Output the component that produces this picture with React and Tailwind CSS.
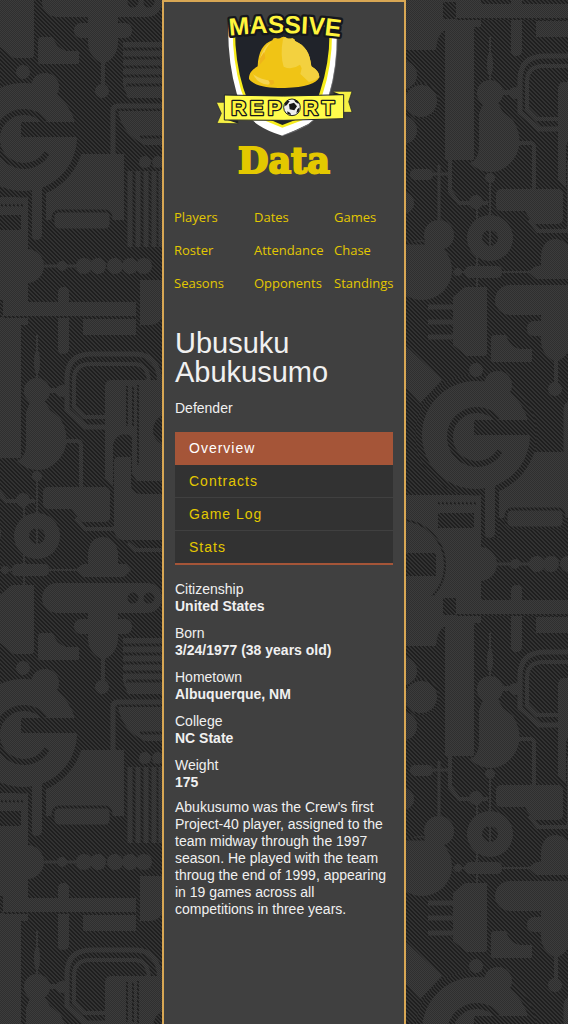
const navLinks = [
  "Players", "Dates", "Games",
  "Roster", "Attendance", "Chase",
  "Seasons", "Opponents", "Standings",
];

const tabs = ["Overview", "Contracts", "Game Log", "Stats"];

const facts = [
  ["Citizenship", "United States"],
  ["Born", "3/24/1977 (38 years old)"],
  ["Hometown", "Albuquerque, NM"],
  ["College", "NC State"],
  ["Weight", "175"],
];

function Machinery() {
  const dark = "url(#stripes)";
  const light = "url(#mesh)";
  return (
    <g id="machinery" fill={light} stroke="none">
      {/* tank, bar and piston */}
      <path d="M12 -11H34V55Q34 58 30 58H14L0 47V-1Z" />
      <rect x="42" y="-13" width="120" height="30" rx="15" />
      <circle cx="133" cy="2" r="5.5" fill={dark} />
      <circle cx="149" cy="2" r="5.5" fill={dark} />
      <path d="M88 0H118V42Q118 56 105 63H101Q88 56 88 42Z" />
      <rect x="74" y="23" width="58" height="15" rx="7" />
      <rect x="101" y="60" width="4" height="30" />
      <circle cx="102" cy="91" r="7" />
      <path d="M40 37H53Q56 48 66 51H79V64H41Q38 64 38 61V39Z" />
      <path d="M-25 9H0M-25 24H0M-25 39H0" stroke={light} strokeWidth="5" />
      <path d="M-53 42L-11 82L-33 105L-53 84Z" />
      {/* ribs on the right */}
      <path d="M123 42H162V98H128L123 85Z" />
      <path d="M123 49H162M123 58H162M123 67H162M123 76H162M126 85H162" stroke={dark} strokeWidth="3" />
      <path d="M118 111H162V145H145Q122 134 118 111Z" />
      <path d="M140 137H162" stroke={dark} strokeWidth="3" />
      <path d="M162 106H118Q113 106 113 111V156" fill="none" stroke={light} strokeWidth="5" />
      <circle cx="145" cy="162" r="6" />
      <circle cx="158" cy="162" r="6" />
      <path d="M130 171V247M138 171V247M146 171V247M154 171V247M161 171V247" stroke={light} strokeWidth="5" />
      {/* block behind the wheel */}
      <path d="M82 154H124V220H45V190Z" />
      <rect x="53" y="211" width="58" height="19" rx="6" stroke={dark} strokeWidth="3" />
      <path d="M-47 197H28V325H-47Z" />
      {/* wheel */}
      <circle cx="23" cy="137" r="57" fill="none" stroke={dark} strokeWidth="7" />
      <circle cx="23" cy="72" r="7" />
      <circle cx="23" cy="137" r="54" />
      <circle cx="45" cy="87" r="14" />
      <path d="M73 117L80 137H76V122Z" fill={dark} />
      <path d="M45 122A27 27 0 1 0 47 153" fill="none" stroke={dark} strokeWidth="6" />
      <path d="M21 122H80V137H21Z" fill={dark} />
      <path d="M28 191H46V240H28Z" fill={dark} />
      <rect x="32" y="183" width="10" height="57" rx="5" />
      <path d="M-15 205H25" stroke={dark} strokeWidth="3" strokeDasharray="2 2" />
      <rect x="-15" y="215" width="36" height="15" fill={dark} />
      <rect x="-47" y="255" width="30" height="23" fill={dark} />
      <circle cx="-53" cy="267" r="45" fill="none" stroke={dark} strokeWidth="2" />
      <circle cx="27" cy="266" r="17" />
      {/* chain */}
      <path d="M44 266H100" stroke={light} strokeWidth="3" />
      <circle cx="62" cy="266" r="5" />
      <circle cx="84" cy="266" r="8" />
      <circle cx="98" cy="266" r="8" />
      <circle cx="115" cy="266" r="8" />
      <circle cx="130" cy="266" r="8" />
      <circle cx="144" cy="266" r="8" />
      {/* cross beam */}
      <rect x="-8" y="300" width="29" height="158" />
      <path d="M-47 298H-8V328Q-16 332 -17 348H-47Z" />
      <rect x="2" y="302" width="134" height="14" />
      <rect x="-10" y="300" width="13" height="17" fill={dark} />
      <rect x="58" y="287" width="11" height="67" rx="5" />
      <rect x="83" y="319" width="53" height="16" />
      <path d="M140 280H162V318Q158 325 150 325H140Z" />
      <path d="M3 317H136" stroke={dark} strokeWidth="2" />
      {/* double pipe and engine */}
      <path d="M107 427H86L67 410V378Q67 354 92 354H135Q158 354 160 382" fill="none" stroke={light} strokeWidth="5" />
      <path d="M107 417H84L74 407V380Q74 364 90 364H134Q148 364 149 382" fill="none" stroke={light} strokeWidth="4" />
      <path d="M111 380H162V481H137L132 474V436Q118 430 113 444V486L105 478V388Q105 380 111 380Z" />
      <path d="M138 385V465M127 386V426M133 386V426" stroke={dark} strokeWidth="2" />
      <circle cx="169" cy="430" r="16" fill={dark} />
      <path d="M116 457H131V486Q132 493 140 494H162V540H122Q114 538 114 528V460Z" />
      <path d="M128 543L136 550H162" fill="none" stroke={light} strokeWidth="4" />
      {/* flask */}
      <path d="M37 335V385" stroke={light} strokeWidth="2" />
      <ellipse cx="37" cy="362" rx="3" ry="12" />
      <circle cx="37" cy="391" r="13" />
      <circle cx="62" cy="391" r="6" />
      <path d="M48 388H62V393H48Z" />
      <path d="M31 400H44L50 410L60 418Q72 438 62 455Q52 470 38 470Q26 470 17 461Q26 457 26 445V412Z" />
      <path d="M66 441H77Q81 441 81 445V487" fill="none" stroke={light} strokeWidth="4" />
      <circle cx="37" cy="476" r="5" />
      <path d="M37 476V515M24 500V585" stroke={light} strokeWidth="2" />
      <rect x="43" y="487" width="67" height="22" rx="5" />
      <path d="M70 506H110V518Q109 522 104 522H82L75 514Z" />
      <path d="M76 518L85 529H116" fill="none" stroke={light} strokeWidth="4" />
      <path d="M-3 457V489L6 501H35" fill="none" stroke={light} strokeWidth="4" />
      <circle cx="23" cy="500" r="7" />
      <circle cx="37" cy="536" r="23" />
      <circle cx="37" cy="536" r="8" fill={dark} />
      <path d="M37 528V544" stroke={light} strokeWidth="2" />
      {/* dome and shaft */}
      <path d="M0 570H90" stroke={light} strokeWidth="2" />
      <circle cx="5" cy="570" r="4" />
      <rect x="12" y="564" width="37" height="12" rx="5" />
      <path d="M88 577V553Q90 537 103 537Q116 538 118 553V577Z" />
      <path d="M75 570L83 564H126L131 570L124 577H83Z" />
      {/* gears on the left */}
      <circle cx="-50" cy="373" r="14" />
      <circle cx="-50" cy="428" r="14" />
      <circle cx="-32" cy="399" r="17" stroke={dark} strokeWidth="2" />
      <rect x="-43" y="467" width="23" height="11" rx="5" />
      <path d="M-20 472H-5M-14 463V518" stroke={light} strokeWidth="3" />
      <circle cx="-50" cy="501" r="11" />
      <circle cx="-14" cy="533" r="15" />
      <circle cx="-31" cy="568" r="30" />
      <path d="M-47 541H-28" stroke={dark} strokeWidth="3" />
    </g>
  );
}

function Backdrop() {
  return (
    <svg className="fixed inset-0 -z-10 h-full w-full" aria-hidden="true">
      <defs>
        <pattern id="stripes" width="4" height="4" patternUnits="userSpaceOnUse">
          <rect width="4" height="4" fill="#323232" />
          <path d="M0 0h2v1H0zM1 1h2v1H1zM2 2h2v1H2zM3 3h1v1H3zM0 3h1v1H0z" fill="#1f1f1f" shapeRendering="crispEdges" />
        </pattern>
        <pattern id="mesh" width="2" height="2" patternUnits="userSpaceOnUse">
          <rect width="2" height="2" fill="#2f2f2f" />
          <path d="M0 0h1v1H0zM1 1h1v1H1z" fill="#3c3c3c" shapeRendering="crispEdges" />
        </pattern>
        <Machinery />
      </defs>
      <rect width="100%" height="100%" fill="url(#stripes)" />
      <use href="#machinery" />
      <use href="#machinery" y="596" />
      <use href="#machinery" x="453" y="-298" />
      <use href="#machinery" x="453" y="298" />
      <use href="#machinery" x="453" y="894" />
    </svg>
  );
}

function Logo() {
  return (
    <svg viewBox="27 30 420 381" className="h-[127px] w-[140px]" role="img" aria-label="Massive Report">
      <path d="M70 58Q150 85 234 85Q320 85 396 68Q400 190 372 285Q350 345 310 372Q275 390 232 407Q190 395 160 375Q115 345 95 280Q66 180 70 58Z" fill="#fff" />
      <path d="M396 100Q398 200 373 285Q350 345 310 374Q275 394 232 407" fill="none" stroke="#77777c" strokeWidth="2" />
      <path d="M83 80H381Q384 190 352 285Q338 335 300 358L232 383L170 358Q130 335 108 270Q82 180 83 80Z" fill="#f6ec1c" />
      <path d="M90 80H373Q377 180 345 275Q330 330 292 352L232 375L178 352Q135 330 115 265Q89 180 90 80Z" fill="#20232a" />
      {/* hard hat */}
      <path d="M132 237C131 218 143 208 158 199C160 155 175 130 202 121Q204 112 215 115Q223 117 230 112Q237 107 244 114Q250 117 262 115Q270 117 270 123C302 137 315 160 319 199Q344 214 343 232C335 250 300 263 240 264C190 265 145 257 132 237Z" fill="#f0c415" />
      <path d="M234 117Q240 108 246 115Q254 118 262 115Q270 117 270 123C302 137 315 160 319 199Q344 214 343 232Q330 243 312 246L286 222L290 205L285 194Q260 212 236 200Q225 165 234 117Z" fill="#f3d13f" />
      <path d="M202 124Q172 140 163 185L178 162Q180 145 202 124ZM144 222Q165 240 200 242L190 254Q158 252 144 222Z" fill="#f5d552" />
      <path d="M165 175L178 155L181 175L164 194ZM190 240L205 240L208 250L198 256Z" fill="#eeb41a" />
      {/* ribbon */}
      <path d="M34 307H62V358H100V371L36 370L49 340Z" fill="#f6f044" stroke="#20232a" strokeWidth="2" />
      <path d="M60 357H100V371Z" fill="#20232a" />
      <path d="M385 284V274H441L431 305L441 337H412V284Z" fill="#f6f044" stroke="#20232a" strokeWidth="2" />
      <path d="M385 275L416 287H385Z" fill="#20232a" />
      <path d="M58 285Q236 292 416 284V356Q236 364 58 360Z" fill="#fffc4c" stroke="#20232a" strokeWidth="3" />
      <g fontFamily="'Liberation Sans', sans-serif" fontWeight="700" fill="#fff43c" stroke="#15171c" strokeLinejoin="round" paintOrder="stroke">
        <path id="crest-arc" d="M60 109Q240 87 420 113" fill="none" stroke="none" />
        <text fontSize="74" strokeWidth="14" textAnchor="middle">
          <textPath href="#crest-arc" startOffset="50%">MASSIVE</textPath>
        </text>
        <g fontSize="62" strokeWidth="8" textAnchor="middle">
          <text x="101" y="346">R</text>
          <text x="155" y="346">E</text>
          <text x="209" y="346">P</text>
          <text x="317" y="345">R</text>
          <text x="369" y="345">T</text>
        </g>
      </g>
      {/* ball */}
      <circle cx="261" cy="322" r="25" fill="#eee" stroke="#222" strokeWidth="3" />
      <path d="M252 313L267 308L276 319L268 331L254 328ZM240 309L248 301L254 304L245 316L239 318ZM266 298L279 304L281 312L271 306ZM277 328L284 322L281 335L274 339ZM247 334L256 339L258 345L247 341Z" fill="#171717" />
    </svg>
  );
}

export default function App() {
  return (
    <>
      <Backdrop />
      <div className="mx-auto min-h-screen w-full max-w-61 border-2 border-b-0 border-[#d8a754] bg-[#404040] pb-24 font-['Liberation_Sans',sans-serif] text-sm leading-[17px] text-[#f0f0f0]">
        <header className="pt-2">
          <a href="#home" className="flex flex-col items-center">
            <Logo />
            <span className="font-['DejaVu_Serif',serif] text-[35px] leading-12 font-bold text-[#e3c800] [-webkit-text-stroke:2px_#e3c800]">
              Data
            </span>
          </a>
          <nav className="mt-4 grid grid-cols-3 font-['Open_Sans',sans-serif] text-[13px] leading-[33px] text-[#e3c800]">
            {navLinks.map((label) => (
              <a key={label} href={"#" + label.toLowerCase()} className="pl-2.5">
                {label}
              </a>
            ))}
          </nav>
        </header>
        <main className="px-[11px] pt-[29px]">
          <h1 className="text-[29px] leading-[29px]">Ubusuku Abukusumo</h1>
          <p className="mt-[13px]">Defender</p>
          <nav className="mt-[15px] border-b-2 border-[#a55538] tracking-[1px]">
            <ul>
              {tabs.map((tab, i) => (
                <li key={tab} className="group">
                  <a
                    href={"#" + tab.toLowerCase().replace(" ", "-")}
                    className={
                      i === 0
                        ? "block border-b border-[#a55538] bg-[#a55538] px-3.5 leading-8 text-white"
                        : "block border-b border-[#404040] bg-[#323232] px-3.5 leading-8 text-[#e3c800] group-last:border-b-0"
                    }
                  >
                    {tab}
                  </a>
                </li>
              ))}
            </ul>
          </nav>
          <dl className="mt-4 flex flex-col gap-2.5">
            {facts.map(([term, value]) => (
              <div key={term}>
                <dt>{term}</dt>
                <dd className="font-bold">{value}</dd>
              </div>
            ))}
          </dl>
          <p className="mt-2">
            Abukusumo was the Crew's first Project-40 player, assigned to the team midway through the
            1997 season. He played with the team throug the end of 1999, appearing in 19 games across
            all competitions in three years.
          </p>
        </main>
      </div>
    </>
  );
}
